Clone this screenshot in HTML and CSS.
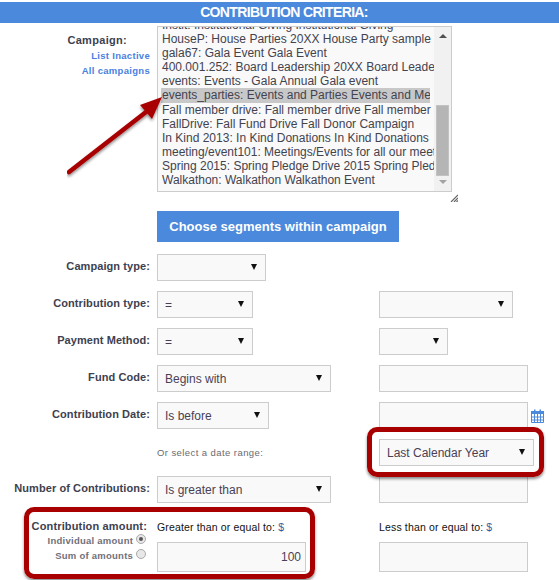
FILE: index.html
```html
<!DOCTYPE html>
<html lang="en">
<head>
    <meta charset="UTF-8">
    <meta name="viewport" content="width=device-width, initial-scale=1.0">
    <title>Contribution Criteria</title>
    <link rel="stylesheet" href="styles.css">
</head>
<body>
    <h1 class="title">CONTRIBUTION CRITERIA:</h1>

    <div class="campaign-row">
        <div class="campaign-labels">
            <label class="field-label">Campaign:</label>
            <a class="side-link" href="#">List Inactive</a>
            <a class="side-link" href="#">All campaigns</a>
        </div>
        <div class="listbox">
            <div class="listbox-items">
                <div class="first-item">Instit: Institutional Giving Institutional Giving</div>
                <div>HouseP: House Parties 20XX House Party sample</div>
                <div>gala67: Gala Event Gala Event</div>
                <div>400.001.252: Board Leadership 20XX Board Leadership</div>
                <div>events: Events - Gala Annual Gala event</div>
                <div class="selected"><span>events_parties: Events and Parties Events and Meetings</span></div>
                <div>Fall member drive: Fall member drive Fall member drive</div>
                <div>FallDrive: Fall Fund Drive Fall Donor Campaign</div>
                <div>In Kind 2013: In Kind Donations In Kind Donations</div>
                <div>meeting/event101: Meetings/Events for all our meetings</div>
                <div>Spring 2015: Spring Pledge Drive 2015 Spring Pledge</div>
                <div>Walkathon: Walkathon Walkathon Event</div>
            </div>
            <div class="scrollbar">
                <span class="arrow-up"></span>
                <span class="thumb"></span>
                <span class="arrow-down"></span>
            </div>
            <svg class="resize-grip" width="8" height="8" viewBox="0 0 8 8">
                <path d="M1 8 8 1M4 8 8 4M6.5 8 8 6.5" stroke="#666" stroke-width="1.2" fill="none"/>
            </svg>
        </div>
    </div>

    <button class="segments-btn" type="button">Choose segments within campaign</button>

    <div class="criteria">
        <div class="row">
            <label class="field-label">Campaign type:</label>
            <div class="select w-109"><span></span></div>
        </div>

        <div class="row">
            <label class="field-label">Contribution type:</label>
            <div class="select w-96"><span>=</span></div>
            <div class="select w-134 right"><span></span></div>
        </div>

        <div class="row">
            <label class="field-label">Payment Method:</label>
            <div class="select w-96"><span>=</span></div>
            <div class="select w-69 right"><span></span></div>
        </div>

        <div class="row">
            <label class="field-label">Fund Code:</label>
            <div class="select w-174"><span>Begins with</span></div>
            <div class="text-box w-149 right"></div>
        </div>

        <div class="row">
            <label class="field-label">Contribution Date:</label>
            <div class="select w-112"><span>Is before</span></div>
            <div class="text-box w-149 right"></div>
            <svg class="calendar" width="13" height="14" viewBox="0 0 13 14">
                <path d="M3 0.5h1.5v3H3zM8.5 0.5H10v3H8.5z" fill="#4a89dc"/>
                <path d="M0.5 2.5h12v11h-12z" fill="#fff" stroke="#4a89dc"/>
                <path d="M0 2h13v3H0z" fill="#4a89dc"/>
                <path d="M0.5 8h12M0.5 11h12M3.5 5v8M6.5 5v8M9.5 5v8" stroke="#4a89dc" fill="none"/>
            </svg>
        </div>

        <div class="row range-row">
            <span class="range-hint">Or select a date range:</span>
            <div class="select w-155 right"><span>Last Calendar Year</span></div>
        </div>

        <div class="row">
            <label class="field-label">Number of Contributions:</label>
            <div class="select w-174"><span>Is greater than</span></div>
            <div class="text-box w-149 right"></div>
        </div>

        <div class="amount-row">
            <div class="amount-labels">
                <label class="field-label">Contribution amount:</label>
                <div class="radio-line">Individual amount <span class="radio checked"></span></div>
                <div class="radio-line">Sum of amounts <span class="radio"></span></div>
            </div>
            <div class="amount-field">
                <div class="amount-caption">Greater than or equal to: <span class="dollar">$</span></div>
                <div class="text-box w-149 value">100</div>
            </div>
            <div class="amount-field right">
                <div class="amount-caption">Less than or equal to: <span class="dollar">$</span></div>
                <div class="text-box w-149"></div>
            </div>
        </div>
    </div>

    <!-- annotations on top of the screenshot -->
    <div class="callout callout-range"></div>
    <div class="callout callout-amount"></div>
    <svg class="arrow" width="120" height="90" viewBox="0 0 120 90">
        <defs>
            <filter id="arrowShadow" x="-20%" y="-20%" width="140%" height="140%">
                <feDropShadow dx="0" dy="2" stdDeviation="1.5" flood-color="#000" flood-opacity="0.45"/>
            </filter>
        </defs>
        <g filter="url(#arrowShadow)">
            <path d="M2 80 79 20" stroke="#a80000" stroke-width="4.5" stroke-linecap="round" fill="none"/>
            <path d="M95 5 73 13 85 27z" fill="#a80000"/>
        </g>
    </svg>
</body>
</html>
```

FILE: styles.css
```css
body {
    margin: 0;
    padding: 2px 0 0;
    height: 578px;
    overflow: hidden;
    position: relative;
    font-family: 'Liberation Sans', Arial, sans-serif;
    background: #fff;
    color: #4a4a55;
}

.title {
    margin: 0;
    padding-left: 9px;
    height: 21px;
    line-height: 20px;
    background: #4a89dc;
    color: #fff;
    font-size: 14px;
    font-weight: bold;
    letter-spacing: -0.65px;
    text-align: center;
}

.campaign-row {
    display: flex;
    margin-top: 3px;
}

.campaign-labels {
    width: 150px;
    display: flex;
    flex-direction: column;
    align-items: flex-end;
    margin-right: 7px;
}

.field-label {
    font-size: 11px;
    font-weight: bold;
    letter-spacing: 0.08px;
    color: #3d4150;
    line-height: 14px;
}

.campaign-labels .field-label {
    margin: 7px 23px 1px 0;
    letter-spacing: 0.3px;
}

.side-link {
    font-size: 9.5px;
    font-weight: bold;
    letter-spacing: 0.3px;
    line-height: 15px;
    color: #4a7fe0;
    text-decoration: none;
}

.listbox {
    position: relative;
    width: 293px;
    height: 164px;
    border: 1px solid #ccc;
    background: #f9f9f9;
    font-size: 12px;
    line-height: 14.1px;
    color: #43434f;
}

.listbox-items {
    width: 276px;
    height: 164px;
    padding-left: 4px;
    box-sizing: border-box;
    overflow: hidden;
    white-space: nowrap;
}

.first-item {
    margin-top: -9px;
}

.selected span {
    display: block;
    width: 268px;
    margin-left: -1px;
    padding-left: 1px;
    background: #c8c8c8;
    overflow: hidden;
}

.scrollbar {
    position: absolute;
    top: 0;
    right: 0;
    width: 17px;
    height: 164px;
    background: #f1f1f1;
}

.arrow-up, .arrow-down {
    position: absolute;
    left: 5px;
    width: 0;
    height: 0;
    border-left: 4px solid transparent;
    border-right: 4px solid transparent;
}

.arrow-up {
    top: 7px;
    border-bottom: 4px solid #505050;
}

.arrow-down {
    bottom: 7px;
    border-top: 4px solid #a3a3a3;
}

.thumb {
    position: absolute;
    top: 78px;
    left: 2px;
    width: 13px;
    height: 71px;
    background: #b5b5b5;
    border: 1px solid #c2c2c2;
    box-sizing: border-box;
}

.resize-grip {
    position: absolute;
    right: -7px;
    bottom: -11px;
}

.segments-btn {
    display: block;
    width: 242px;
    height: 31px;
    margin: 19px 0 0 157px;
    border: none;
    background: #4a89dc;
    color: #fff;
    font-family: inherit;
    font-size: 13px;
    font-weight: bold;
    padding: 0;
}

.criteria {
    margin-top: 12px;
}

.row {
    position: relative;
    display: flex;
    height: 27px;
    margin-bottom: 10px;
    align-items: flex-start;
}

.row > .field-label {
    width: 150px;
    margin-right: 7px;
    text-align: right;
    padding-top: 5px;
    flex: none;
}

.select, .text-box {
    box-sizing: border-box;
    height: 27px;
    border: 1px solid #ccc;
    background: #f9f9f9;
    font-size: 12px;
    color: #4a3f55;
    flex: none;
}

.select {
    position: relative;
    line-height: 26px;
    padding-left: 7px;
}

.select::after {
    content: "";
    position: absolute;
    right: 8px;
    top: 9px;
    width: 0;
    height: 0;
    border-left: 3.5px solid transparent;
    border-right: 3.5px solid transparent;
    border-top: 6px solid #111;
}

.right {
    position: absolute;
    left: 379px;
    top: 0;
}

.w-69 { width: 69px; }
.w-96 { width: 96px; }
.w-109 { width: 109px; }
.w-112 { width: 112px; }
.w-134 { width: 134px; }
.w-149 { width: 149px; }
.w-155 { width: 155px; }
.w-174 { width: 174px; }

.calendar {
    position: absolute;
    left: 531px;
    top: 7px;
}

.range-hint {
    margin: 7px 0 0 157px;
    font-size: 9.5px;
    letter-spacing: 0.42px;
    color: #6a6a70;
    line-height: 14px;
}

.amount-row {
    position: relative;
    display: flex;
    margin-top: 17px;
}

.amount-labels {
    width: 150px;
    margin-right: 7px;
    text-align: right;
    flex: none;
}

.amount-labels .field-label {
    display: block;
    margin: -1px 3px 0 0;
    letter-spacing: 0.15px;
}

.radio-line {
    font-size: 9.5px;
    font-weight: bold;
    letter-spacing: 0.25px;
    line-height: 15px;
    color: #70707a;
    white-space: nowrap;
    padding-right: 4px;
}

.radio {
    display: inline-block;
    box-sizing: border-box;
    width: 10px;
    height: 10px;
    border: 1px solid #aaa;
    border-radius: 50%;
    background: #e8e8e8;
    vertical-align: 0;
    position: relative;
}

.radio.checked::after {
    content: "";
    position: absolute;
    left: 2px;
    top: 2px;
    width: 4px;
    height: 4px;
    border-radius: 50%;
    background: #555;
}

.amount-caption {
    font-size: 10.5px;
    letter-spacing: 0.15px;
    color: #111;
    line-height: 14px;
    margin-bottom: 8px;
}

.dollar {
    color: #2f5f9f;
}

.amount-field .text-box {
    height: 30px;
}

.value {
    text-align: right;
    padding-right: 4px;
    line-height: 29px;
}

.callout {
    position: absolute;
    box-sizing: border-box;
    border: 5px solid #a80000;
    border-radius: 10px;
    box-shadow: 0 2px 3px rgba(0, 0, 0, 0.45);
}

.callout-range {
    left: 367px;
    top: 427px;
    width: 177px;
    height: 50px;
}

.callout-amount {
    left: 24px;
    top: 507px;
    width: 291px;
    height: 72px;
}

.arrow {
    position: absolute;
    left: 67px;
    top: 92px;
}
```
